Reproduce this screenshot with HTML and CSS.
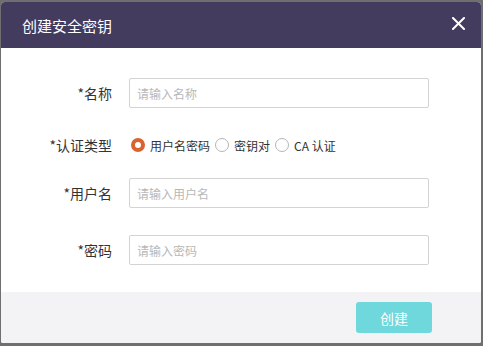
FILE: index.html
```html
<!DOCTYPE html>
<html lang="zh-CN">
<head>
    <meta charset="UTF-8">
    <meta name="viewport" content="width=device-width, initial-scale=1.0">
    <title>创建安全密钥</title>
    <link rel="stylesheet" href="styles.css">
</head>
<body>

    <div class="dialog">
        <div class="dialog-header">
            <span class="dialog-title">创建安全密钥</span>
            <button class="close" aria-label="关闭">
                <svg width="13" height="13" viewBox="0 0 13 13"><path d="M1 1L12 12M12 1L1 12" stroke="#fff" stroke-width="2" stroke-linecap="square"/></svg>
            </button>
        </div>

        <div class="dialog-body">
            <div class="form-row row-name">
                <label class="form-label">*名称</label>
                <input class="form-input" type="text" placeholder="请输入名称">
            </div>
            <div class="form-row row-type">
                <label class="form-label">*认证类型</label>
                <div class="radios">
                    <label class="radio checked"><span class="dot"></span>用户名密码</label>
                    <label class="radio"><span class="dot"></span>密钥对</label>
                    <label class="radio"><span class="dot"></span>CA 认证</label>
                </div>
            </div>
            <div class="form-row row-user">
                <label class="form-label">*用户名</label>
                <input class="form-input" type="text" placeholder="请输入用户名">
            </div>
            <div class="form-row row-pass">
                <label class="form-label">*密码</label>
                <input class="form-input" type="password" placeholder="请输入密码">
            </div>
        </div>

        <div class="dialog-footer">
            <button class="btn-create">创建</button>
        </div>
    </div>

</body>
</html>
```

FILE: styles.css
```css
* { box-sizing: border-box; margin: 0; padding: 0; }
body {
    font-family: "Noto Sans CJK SC", "Noto Sans", sans-serif;
    background: #6f6f6f;
    padding: 2px 2px 3px 1px;
}

.dialog {
    width: 480px;
    height: 341px;
    background: #fff;
    border-radius: 4px 4px 2px 2px;
    overflow: hidden;
    display: flex;
    flex-direction: column;
}

.dialog-header {
    height: 46px;
    background: #433c5f;
    color: #fff;
    display: flex;
    align-items: center;
    justify-content: space-between;
    padding: 0 15px 0 21px;
}
.dialog-title { font-size: 15px; line-height: 20px; padding-top: 1px; }
.close {
    background: none;
    border: none;
    width: 15px;
    height: 15px;
    display: flex;
    align-items: center;
    justify-content: center;
    margin-top: -3px;
    cursor: pointer;
}

.dialog-body {
    flex: 1;
    padding-top: 30px;
}

.form-row {
    display: flex;
    align-items: center;
    height: 30px;
}
.row-type { margin-top: 22px; }
.row-user { margin-top: 18px; }
.row-pass { margin-top: 27px; }

.form-label {
    width: 111px;
    text-align: right;
    font-size: 14px;
    color: #333;
    margin-right: 17px;
}

.form-input {
    width: 300px;
    height: 30px;
    border: 1px solid #d3d3d3;
    border-radius: 2px;
    padding: 0 7px;
    font-family: inherit;
    font-size: 12px;
    color: #333;
    outline: none;
}
.form-input::placeholder { color: #b8b8b8; }

.radios { display: flex; align-items: center; font-size: 12px; color: #333; padding-left: 2px; }
.radio { display: flex; align-items: center; margin-right: 5px; cursor: pointer; }
.radio .dot {
    width: 14px;
    height: 14px;
    border: 1px solid #b5b5b5;
    border-radius: 50%;
    margin-right: 5px;
    background: #fff;
}
.radio.checked .dot {
    border: 4px solid #d9642f;
    background: #fff;
}

.dialog-footer {
    height: 51px;
    background: #f3f3f6;
    display: flex;
    justify-content: flex-end;
    align-items: center;
    padding-right: 49px;
}
.btn-create {
    width: 76px;
    height: 31px;
    background: #6ed8dd;
    color: #fff;
    border: none;
    border-radius: 3px;
    font-family: inherit;
    font-size: 14px;
    cursor: pointer;
}
```
